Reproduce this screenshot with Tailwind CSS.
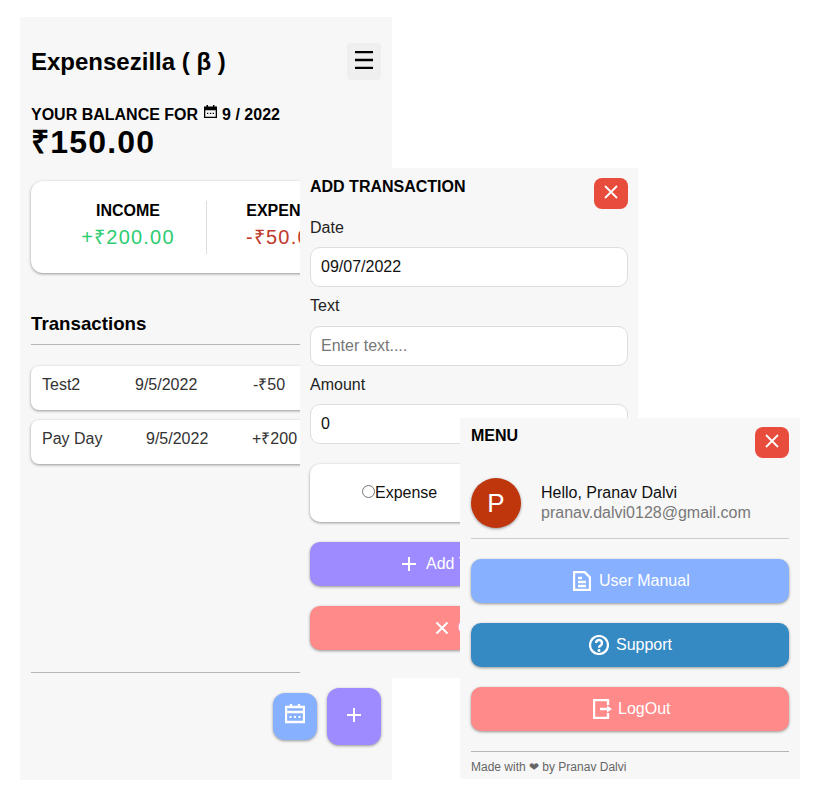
<!DOCTYPE html>
<html lang="en">
<head>
<meta charset="utf-8">
<title>Expensezilla</title>
<script src="https://cdn.jsdelivr.net/npm/@tailwindcss/browser@4"></script>
</head>
<body class="bg-white font-['Liberation_Sans',Arial,sans-serif] text-black">
<div class="relative w-[820px] h-[797px] overflow-hidden">

  <!-- Main window -->
  <section class="absolute left-[20px] top-[17px] w-[372px] h-[763px] bg-[#f7f7f7] px-[11px] flex flex-col">
    <header class="flex items-center justify-between h-[37px] mt-[26px]">
      <h1 class="text-[24px] font-bold leading-[37px]">Expensezilla ( β )</h1>
      <button class="w-[34px] h-[37px] rounded-[4px] bg-[#efefef] flex items-center justify-center">
        <svg class="-mt-[3px]" width="18" height="18" viewBox="0 0 18 18"><path d="M0 1h18M0 9h18M0 17h18" stroke="#000" stroke-width="2.300"/></svg>
      </button>
    </header>
    <div class="mt-[25px] text-[16px] font-bold leading-[19px] flex items-center h-[19px]">
      <span>YOUR BALANCE FOR</span>
      <svg class="ml-[6px] mr-[5px] -mt-[6px]" width="13" height="13" viewBox="0 0 13 13"><path fill="#000" fill-rule="evenodd" d="M2.500 0h1.500v1.500h5V0h1.500v1.500H13V13H0V1.500h2.500zM1.300 5.200v6.500h10.400V5.200z"/><path fill="#000" d="M3 7.800h1.300v1.300H3zM5.900 7.800h1.300v1.300H5.900zM8.700 7.800h1.300v1.300H8.700z"/></svg>
      <span>9 / 2022</span>
    </div>
    <div class="text-[32px] font-bold leading-[37px] tracking-[1.2px]">₹150.00</div>

    <div class="mt-[20px] h-[92px] bg-white rounded-[12px] shadow-[0_1px_3px_rgba(0,0,0,0.4)] flex items-center py-[19px]">
      <div class="w-[175px] flex flex-col items-center pl-[19px] pb-[2px]">
        <div class="font-bold text-[16px] leading-[19px] mb-[2px]">INCOME</div>
        <div class="text-[20px] leading-[30px] tracking-[1.2px] text-[#2ecc71]">+₹200.00</div>
      </div>
      <div class="w-px h-[53px] bg-[#ddd]"></div>
      <div class="flex-1 flex flex-col items-center pr-[20px] pb-[2px]">
        <div class="font-bold text-[16px] leading-[19px] mb-[2px]">EXPENSE</div>
        <div class="text-[20px] leading-[30px] tracking-[1.2px] text-[#c0392b]">-₹50.00</div>
      </div>
    </div>

    <h2 class="mt-[40px] text-[18.72px] font-bold leading-[22px]">Transactions</h2>
    <div class="mt-[9px] h-px bg-[#b5b5b5]"></div>

    <ul class="mt-[21px] flex flex-col gap-[10px]">
      <li class="h-[44px] bg-white rounded-[8px] shadow-[0_1px_3px_rgba(0,0,0,0.4)] flex items-start pt-[10px] pl-[11px] text-[16px] leading-[18px] text-[#333]">
        <span class="w-[93px]">Test2</span><span class="w-[118px]">9/5/2022</span><span>-₹50</span>
      </li>
      <li class="h-[44px] bg-white rounded-[8px] shadow-[0_1px_3px_rgba(0,0,0,0.4)] flex items-start pt-[10px] pl-[11px] text-[16px] leading-[18px] text-[#333]">
        <span class="w-[104px]">Pay Day</span><span class="w-[106px]">9/5/2022</span><span>+₹200</span>
      </li>
    </ul>

    <div class="mt-auto mb-[107px] h-px bg-[#b5b5b5]"></div>
  </section>

  <!-- Floating buttons -->
  <button class="absolute left-[273px] top-[693px] w-[44px] h-[47px] rounded-[12px] bg-[#87b0ff] shadow-[0_1px_3px_rgba(0,0,0,0.4)] flex items-center justify-center">
    <svg class="-mt-[5px]" width="20" height="20" viewBox="0 0 20 20"><path fill="none" stroke="#fff" stroke-width="2.300" d="M1 3h18v15H1zM1 8h18M6 0v4M14 0v4"/><path stroke="#fff" stroke-width="2" d="M4.500 13h2M9 13h2M13.500 13h2"/></svg>
  </button>
  <button class="absolute left-[327px] top-[688px] w-[54px] h-[57px] rounded-[12px] bg-[#9d8bff] shadow-[0_1px_3px_rgba(0,0,0,0.4)] flex items-center justify-center">
    <svg class="-mt-[3px]" width="14" height="14" viewBox="0 0 14 14"><path stroke="#fff" stroke-width="2" d="M7 0v14M0 7h14"/></svg>
  </button>

  <!-- Add transaction window -->
  <section class="absolute left-[300px] top-[168px] w-[338px] h-[510px] bg-[#f7f7f7] px-[10px]">
    <div class="flex justify-between items-start pt-[10px] h-[41px]">
      <h3 class="font-bold text-[16px] leading-[18px]">ADD TRANSACTION</h3>
      <button class="w-[34px] h-[31px] rounded-[8px] bg-[#e74c3c] flex items-center justify-center">
        <svg class="-mt-[3px]" width="14" height="14" viewBox="0 0 14 14"><path stroke="#fff" stroke-width="1.800" d="M1 1l12 12M13 1L1 13"/></svg>
      </button>
    </div>
    <label class="block mt-[10px] text-[16px] leading-[18px] text-[#222]">Date</label>
    <div class="mt-[10px] h-[40px] bg-white border border-[#ddd] rounded-[10px] pl-[10px] pr-[10px] flex items-center text-[16px] text-[#111]">09/07/2022</div>
    <label class="block mt-[10px] text-[16px] leading-[18px] text-[#222]">Text</label>
    <div class="mt-[11px] h-[40px] bg-white border border-[#ddd] rounded-[10px] px-[10px] flex items-center text-[16px] text-[#777]">Enter text....</div>
    <label class="block mt-[10px] text-[16px] leading-[18px] text-[#222]">Amount</label>
    <div class="mt-[10px] h-[40px] bg-white border border-[#ddd] rounded-[10px] px-[10px] flex items-center text-[16px] text-[#111]">0</div>
    <div class="mt-[20px] h-[58px] bg-white rounded-[10px] shadow-[0_1px_3px_rgba(0,0,0,0.4)] flex items-center pl-[52px] text-[16px] text-[#111]">
      <span class="w-[13px] h-[13px] rounded-full border border-[#767676] bg-white -mt-[3px]"></span><span>Expense</span>
    </div>
    <button class="mt-[20px] w-full h-[44px] rounded-[10px] bg-[#9d8bff] shadow-[0_1px_3px_rgba(0,0,0,0.4)] flex items-center justify-center gap-[10px] pl-[4px] text-white text-[16px]">
      <svg width="14" height="14" viewBox="0 0 14 14"><path stroke="#fff" stroke-width="2" d="M7 0v14M0 7h14"/></svg>
      <span class="w-[114px] whitespace-nowrap text-left">Add Transaction</span>
    </button>
    <button class="mt-[20px] w-full h-[44px] rounded-[10px] bg-[#ff8a8a] shadow-[0_1px_3px_rgba(0,0,0,0.4)] flex items-center justify-center gap-[9px] pl-[5px] text-white text-[16px]">
      <svg width="14" height="14" viewBox="0 0 14 14"><path stroke="#fff" stroke-width="2" d="M1.500 1.500l11 11M12.500 1.500l-11 11"/></svg>
      <span class="w-[50px] whitespace-nowrap text-left">Cancel</span>
    </button>
  </section>

  <!-- Menu window -->
  <section class="absolute left-[460px] top-[418px] w-[340px] h-[361px] bg-[#f7f7f7] px-[11px]">
    <div class="flex justify-between items-start pt-[9px] h-[60px]">
      <h3 class="font-bold text-[16px] leading-[18px]">MENU</h3>
      <button class="w-[34px] h-[31px] rounded-[8px] bg-[#e74c3c] flex items-center justify-center">
        <svg class="-mt-[3px]" width="14" height="14" viewBox="0 0 14 14"><path stroke="#fff" stroke-width="1.800" d="M1 1l12 12M13 1L1 13"/></svg>
      </button>
    </div>
    <div class="flex items-center h-[50px]">
      <div class="w-[50px] h-[50px] rounded-full bg-[#bf360c] shadow-[0_1px_3px_rgba(0,0,0,0.4)] text-white text-[26px] flex items-center justify-center">P</div>
      <div class="ml-[20px] text-[16px] leading-[20px]">
        <div class="text-[#111]">Hello, Pranav Dalvi</div>
        <div class="text-[#777]">pranav.dalvi0128@gmail.com</div>
      </div>
    </div>
    <div class="mt-[10px] h-px bg-[#ccc]"></div>
    <button class="mt-[20px] w-full h-[44px] rounded-[10px] bg-[#87b0ff] shadow-[0_1px_3px_rgba(0,0,0,0.4)] flex items-center justify-center gap-[8px] pl-[2px] text-white text-[16px]">
      <svg width="18" height="20" viewBox="0 0 18 20"><path fill="none" stroke="#fff" stroke-width="2.400" d="M1 1h10.500L17 6.500V19H1zM5 7h4M5 11h8M5 15h8"/></svg>
      <span class="w-[90px] whitespace-nowrap text-left">User Manual</span>
    </button>
    <button class="mt-[20px] w-full h-[44px] rounded-[10px] bg-[#368ac4] shadow-[0_1px_3px_rgba(0,0,0,0.4)] flex items-center justify-center gap-[7px] pl-[2px] text-white text-[16px]">
      <svg width="20" height="20" viewBox="0 0 20 20"><circle cx="10" cy="10" r="9" fill="none" stroke="#fff" stroke-width="2.200"/><path fill="none" stroke="#fff" stroke-width="2.400" d="M7 8a3 3 0 1 1 4.500 2.600c-1 .6-1.500 1-1.500 2.200"/><circle cx="10" cy="15.500" r="1.400" fill="#fff"/></svg>
      <span class="w-[57px] whitespace-nowrap text-left">Support</span>
    </button>
    <button class="mt-[20px] w-full h-[44px] rounded-[10px] bg-[#ff8a8a] shadow-[0_1px_3px_rgba(0,0,0,0.4)] flex items-center justify-center gap-[6px] pl-[4px] text-white text-[16px]">
      <svg width="19" height="20" viewBox="0 0 19 20"><path fill="none" stroke="#fff" stroke-width="2.400" d="M15 6V1H1v18h14v-5M7 10h8"/><path fill="#fff" d="M14 6.500L19 10l-5 3.500z"/></svg>
      <span class="w-[53px] whitespace-nowrap text-left">LogOut</span>
    </button>
    <div class="mt-[20px] h-px bg-[#b5b5b5]"></div>
    <p class="mt-[8px] text-[12px] leading-[14px] text-[#666]">Made with ❤ by Pranav Dalvi</p>
  </section>
</div>
</body>
</html>
